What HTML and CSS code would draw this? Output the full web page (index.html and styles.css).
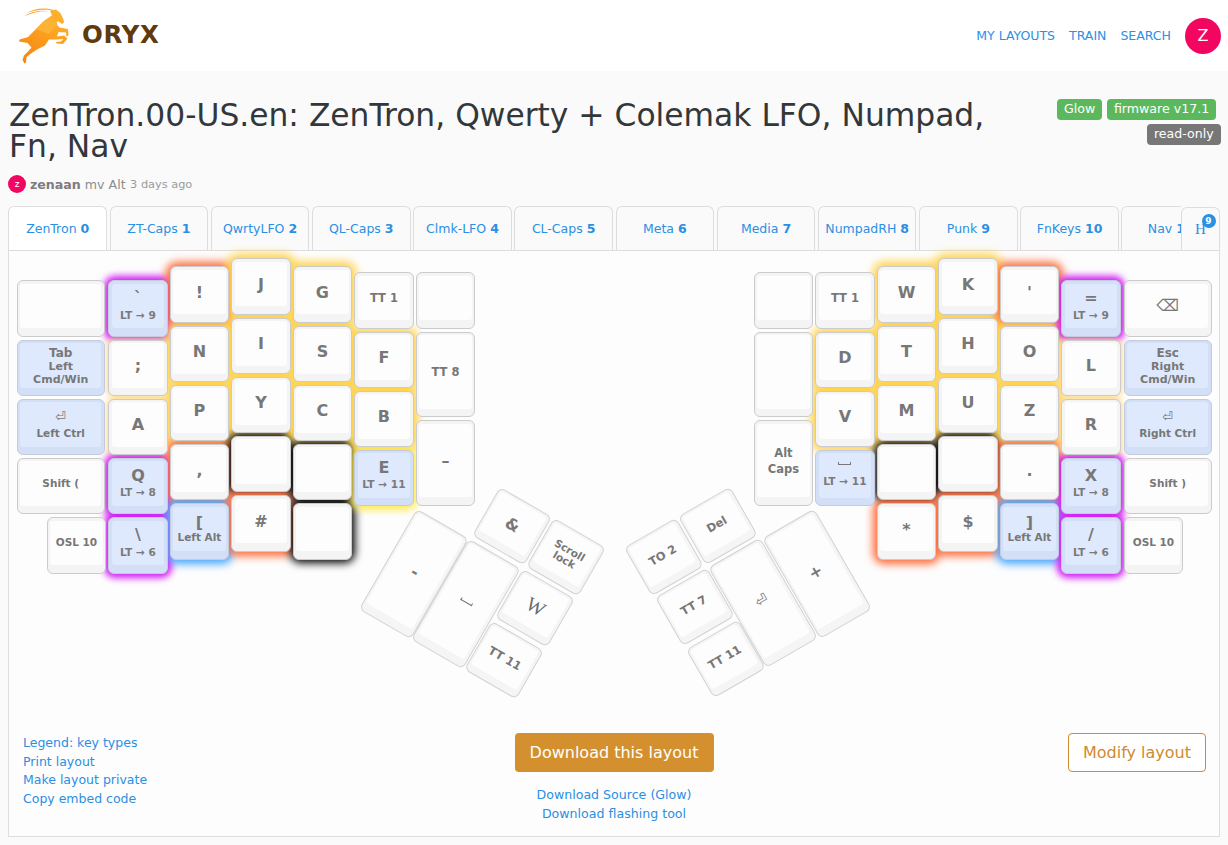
FILE: index.html
```html
<!DOCTYPE html>
<html lang="en">
<head>
<meta charset="utf-8">
<title>ORYX</title>
<link rel="stylesheet" href="styles.css">
</head>
<body>
<nav class="nav">
  <a class="brand" href="#">
    <svg class="logo" viewBox="18 5 54 60" width="54" height="60">
      <defs>
        <linearGradient id="oryx" x1="0.8" y1="0" x2="0.2" y2="1">
          <stop offset="0" stop-color="#fdb52e"/>
          <stop offset="0.55" stop-color="#fb9a1c"/>
          <stop offset="1" stop-color="#f8860f"/>
        </linearGradient>
      </defs>
      <path class="l1" d="M24 15.5C31 10.5 40 8.5 50 10.5C42 9.8 32 11.5 24 15.5Z"/>
      <path class="l1" d="M26.5 12C33 8 44 6 53 8.8L55 10C46 7.8 36 8.8 26.5 12Z"/>
      <path class="l1" d="M50 9.5L56 8.5L60.5 12L63.5 18.5L64 21.5L62 23L58.5 20.5L56.5 20.5L57.5 24.5L59.5 26.5L68 28L68.5 34.5L66.5 35.5L66 31.5L58.5 31L57 35.5L64 34.5L67.5 37.5L63 43L56.5 42.5L56 41L61 40.5L63.5 38L56 38.5L49 38.5L45 44.5L37 48.5L31 52.5L26.5 56L26 61.5L24.5 62.5L22.5 59L24 54.5L28.5 50L31.5 46.5L27.5 42L19 40.5L19.5 38.5L28 36L36 28L44 20L52 14.5Z"/>
      <path class="l3" d="M52 14.5L56.5 20.5L57.5 24.5L49 33L36 28L44 20Z"/>
    </svg>
    <span class="brand-name">ORYX</span>
  </a>
  <div class="nav-links">
    <a href="#">MY LAYOUTS</a>
    <a href="#">TRAIN</a>
    <a href="#">SEARCH</a>
    <span class="avatar">Z</span>
  </div>
</nav>

<main class="page">
  <header class="head">
    <h1>ZenTron.00-US.en: ZenTron, Qwerty + Colemak LFO, Numpad, Fn, Nav</h1>
    <div class="labels">
      <span class="label green">Glow</span><span class="label green">firmware v17.1</span><span class="label grey">read-only</span>
    </div>
  </header>
  <p class="meta"><span class="mini-avatar">z</span><b>zenaan</b><span>mv Alt</span><small>3 days ago</small></p>

  <div class="tabs-wrap">
    <div class="tabs">
      <a class="tab active" href="#">ZenTron <b>0</b></a>
      <a class="tab" href="#">ZT-Caps <b>1</b></a>
      <a class="tab" href="#">QwrtyLFO <b>2</b></a>
      <a class="tab" href="#">QL-Caps <b>3</b></a>
      <a class="tab" href="#">Clmk-LFO <b>4</b></a>
      <a class="tab" href="#">CL-Caps <b>5</b></a>
      <a class="tab" href="#">Meta <b>6</b></a>
      <a class="tab" href="#">Media <b>7</b></a>
      <a class="tab" href="#">NumpadRH <b>8</b></a>
      <a class="tab" href="#">Punk <b>9</b></a>
      <a class="tab" href="#">FnKeys <b>10</b></a>
      <a class="tab" href="#">Nav <b>11</b></a>
    </div>
    <a class="tab-more" href="#">H<span class="badge">9</span></a>
  </div>

  <section class="panel">
    <div class="keyboard">
      <div class="half">
        <div class="col col-wide off22">
          <div class="key wide"><span class="cap"></span></div>
          <div class="key wide blue"><span class="cap"><i class="s2 big2">Tab</i><i class="s2">Left</i><i class="s2">Cmd/Win</i></span></div>
          <div class="key wide blue"><span class="cap"><i class="g">⏎</i><i class="s">Left Ctrl</i></span></div>
          <div class="key wide"><span class="cap"><i class="s">Shift (</i></span></div>
          <div class="key osl-l"><span class="cap"><i class="s">OSL 10</i></span></div>
        </div>
        <div class="col off22">
          <div class="key blue purple"><span class="cap"><i class="m">`</i><i class="lt">LT → 9</i></span></div>
          <div class="key soft"><span class="cap"><i class="b">;</i></span></div>
          <div class="key soft"><span class="cap"><i class="b">A</i></span></div>
          <div class="key blue purple"><span class="cap"><i class="m">Q</i><i class="lt">LT → 8</i></span></div>
          <div class="key blue purple"><span class="cap"><i class="m">\</i><i class="lt">LT → 6</i></span></div>
        </div>
        <div class="col off8">
          <div class="key red"><span class="cap"><i class="b">!</i></span></div>
          <div class="key amber"><span class="cap"><i class="b">N</i></span></div>
          <div class="key amber"><span class="cap"><i class="b">P</i></span></div>
          <div class="key red"><span class="cap"><i class="b">,</i></span></div>
          <div class="key blue azure"><span class="cap"><i class="m">[</i><i class="s">Left Alt</i></span></div>
        </div>
        <div class="col">
          <div class="key amber"><span class="cap"><i class="b">J</i></span></div>
          <div class="key amber"><span class="cap"><i class="b">I</i></span></div>
          <div class="key amber"><span class="cap"><i class="b">Y</i></span></div>
          <div class="key black"><span class="cap"></span></div>
          <div class="key red"><span class="cap"><i class="b">#</i></span></div>
        </div>
        <div class="col off8">
          <div class="key amber"><span class="cap"><i class="b">G</i></span></div>
          <div class="key amber"><span class="cap"><i class="b">S</i></span></div>
          <div class="key amber"><span class="cap"><i class="b">C</i></span></div>
          <div class="key black"><span class="cap"></span></div>
          <div class="key black"><span class="cap"></span></div>
        </div>
        <div class="col off14">
          <div class="key"><span class="cap"><i class="t">TT 1</i></span></div>
          <div class="key amber"><span class="cap"><i class="b">F</i></span></div>
          <div class="key amber"><span class="cap"><i class="b">B</i></span></div>
          <div class="key blue yellow"><span class="cap"><i class="m">E</i><i class="lt">LT → 11</i></span></div>
        </div>
        <div class="col off14">
          <div class="key"><span class="cap"></span></div>
          <div class="key tall"><span class="cap"><i class="t">TT 8</i></span></div>
          <div class="key tall"><span class="cap"><i class="b">–</i></span></div>
        </div>
      </div>

      <div class="half">
        <div class="col off14">
          <div class="key"><span class="cap"></span></div>
          <div class="key tall"><span class="cap"></span></div>
          <div class="key tall"><span class="cap"><i class="a first">Alt</i><i class="a">Caps</i></span></div>
        </div>
        <div class="col off14">
          <div class="key"><span class="cap"><i class="t">TT 1</i></span></div>
          <div class="key amber"><span class="cap"><i class="b">D</i></span></div>
          <div class="key amber"><span class="cap"><i class="b">V</i></span></div>
          <div class="key blue"><span class="cap"><span class="spc"></span><i class="lt">LT → 11</i></span></div>
        </div>
        <div class="col off8">
          <div class="key amber"><span class="cap"><i class="b">W</i></span></div>
          <div class="key amber"><span class="cap"><i class="b">T</i></span></div>
          <div class="key amber"><span class="cap"><i class="b">M</i></span></div>
          <div class="key black"><span class="cap"></span></div>
          <div class="key red"><span class="cap"><i class="b">*</i></span></div>
        </div>
        <div class="col">
          <div class="key amber"><span class="cap"><i class="b">K</i></span></div>
          <div class="key amber"><span class="cap"><i class="b">H</i></span></div>
          <div class="key amber"><span class="cap"><i class="b">U</i></span></div>
          <div class="key black"><span class="cap"></span></div>
          <div class="key red"><span class="cap"><i class="b">$</i></span></div>
        </div>
        <div class="col off8">
          <div class="key red"><span class="cap"><i class="b">'</i></span></div>
          <div class="key amber"><span class="cap"><i class="b">O</i></span></div>
          <div class="key amber"><span class="cap"><i class="b">Z</i></span></div>
          <div class="key red"><span class="cap"><i class="b">.</i></span></div>
          <div class="key blue azure"><span class="cap"><i class="m">]</i><i class="s">Left Alt</i></span></div>
        </div>
        <div class="col off22">
          <div class="key blue purple"><span class="cap"><i class="m">=</i><i class="lt">LT → 9</i></span></div>
          <div class="key soft"><span class="cap"><i class="b">L</i></span></div>
          <div class="key soft"><span class="cap"><i class="b">R</i></span></div>
          <div class="key blue purple"><span class="cap"><i class="m">X</i><i class="lt">LT → 8</i></span></div>
          <div class="key blue purple"><span class="cap"><i class="m">/</i><i class="lt">LT → 6</i></span></div>
        </div>
        <div class="col col-wide-r off22">
          <div class="key wide"><span class="cap"><i class="g big">⌫</i></span></div>
          <div class="key wide blue"><span class="cap"><i class="s2 big2">Esc</i><i class="s2">Right</i><i class="s2">Cmd/Win</i></span></div>
          <div class="key wide blue"><span class="cap"><i class="g">⏎</i><i class="s">Right Ctrl</i></span></div>
          <div class="key wide"><span class="cap"><i class="s">Shift )</i></span></div>
          <div class="key"><span class="cap"><i class="s">OSL 10</i></span></div>
        </div>
      </div>

      <div class="key thumb-l t-amp"><span class="cap"><i class="b">&amp;</i></span></div>
      <div class="key thumb-l t-scroll"><span class="cap"><i class="sc">Scroll lock</i></span></div>
      <div class="key thumb-l t-w"><span class="cap"><i class="wq">W</i></span></div>
      <div class="key thumb-l t-tt11l"><span class="cap"><i class="t">TT 11</i></span></div>
      <div class="key thumb-l long t-dash"><span class="cap"><i class="b">-</i></span></div>
      <div class="key thumb-l long t-space"><span class="cap"><span class="spc"></span></span></div>

      <div class="key thumb-r t-to2"><span class="cap"><i class="t">TO 2</i></span></div>
      <div class="key thumb-r t-del"><span class="cap"><i class="t">Del</i></span></div>
      <div class="key thumb-r t-tt7"><span class="cap"><i class="t">TT 7</i></span></div>
      <div class="key thumb-r t-tt11r"><span class="cap"><i class="t">TT 11</i></span></div>
      <div class="key thumb-r long t-enter"><span class="cap"><i class="g ret">⏎</i></span></div>
      <div class="key thumb-r long t-plus"><span class="cap"><i class="b">+</i></span></div>
    </div>

    <div class="foot">
      <div class="foot-left">
        <a href="#">Legend: key types</a>
        <a href="#">Print layout</a>
        <a href="#">Make layout private</a>
        <a href="#">Copy embed code</a>
      </div>
      <div class="foot-center">
        <a class="btn primary" href="#">Download this layout</a>
        <div class="foot-links">
          <a href="#">Download Source (Glow)</a>
          <a href="#">Download flashing tool</a>
        </div>
      </div>
      <a class="btn outline" href="#">Modify layout</a>
    </div>
  </section>
</main>
</body>
</html>
```
FILE: styles.css
```css
* { box-sizing: border-box; }
html, body { margin: 0; padding: 0; }
body {
  width: 1228px;
  height: 845px;
  overflow: hidden;
  background: #fafafa;
  color: #333;
  font-family: "DejaVu Sans", sans-serif;
}
a { color: #2b8fe3; text-decoration: none; }

/* nav */
.nav {
  height: 71px;
  background: #fff;
  display: flex;
  align-items: center;
  justify-content: space-between;
  padding: 0 7px 0 18px;
}
.brand { display: flex; align-items: center; }
.logo { display: block; }
.l1 { fill: url(#oryx); }
.l3 { fill: #fdb233; }
.brand-name {
  margin-left: 10px;
  margin-top: -2px;
  font-size: 24.5px;
  font-weight: 700;
  letter-spacing: .6px;
  color: #5f3a0c;
}
.nav-links { display: flex; align-items: center; font-size: 12.5px; }
.nav-links a { margin-right: 14px; }
.avatar {
  width: 36px;
  height: 36px;
  border-radius: 50%;
  background: #f2065f;
  color: #fff;
  display: flex;
  align-items: center;
  justify-content: center;
  font-size: 16px;
}

/* page head */
.page { padding: 0 8px; }
.head {
  display: flex;
  justify-content: space-between;
  align-items: flex-start;
  padding-top: 28px;
}
h1 {
  margin: 0 0 0 1px;
  padding-top: 1px;
  width: 1030px;
  height: 64px;
  font-size: 31.33px;
  line-height: 31.4px;
  font-weight: 400;
  color: #32373b;
}
.labels {
  width: 172px;
  margin-right: -1px;
  display: flex;
  flex-wrap: wrap;
  justify-content: flex-end;
  row-gap: 4px;
}
.label {
  height: 21px;
  line-height: 20px;
  padding: 0 6.8px;
  border-radius: 4px;
  font-size: 12.6px;
  color: #fff;
  margin-right: 5px;
}
.green { background: #5cb85c; }
.grey { background: #777; margin-right: 0; padding: 0 7.3px; }
.meta {
  margin: 12px 0 0;
  height: 18px;
  display: flex;
  align-items: center;
  font-size: 12.6px;
  color: #8c8c8c;
}
.meta b { color: #7d7d7d; margin-right: 4px; }
.meta small { font-size: 11.34px; color: #9a9a9a; margin-left: 4.5px; }
.mini-avatar {
  width: 18px;
  height: 18px;
  border-radius: 50%;
  background: #f2065f;
  color: #fff;
  font-size: 9px;
  display: flex;
  align-items: center;
  justify-content: center;
  margin-right: 4px;
}

/* tabs */
.tabs-wrap { position: relative; margin-top: 13px; height: 45px; }
.tabs {
  display: flex;
  gap: 2.6px;
  width: 1173px;
  height: 45px;
  padding-left: .4px;
  overflow: hidden;
}
.tab {
  flex: 0 0 98.6px;
  height: 45px;
  padding-bottom: 1px;
  border: 1px solid #ddd;
  border-bottom: 0;
  border-radius: 6px 6px 0 0;
  display: flex;
  align-items: center;
  justify-content: center;
  font-size: 12.5px;
  white-space: pre;
  background: #fafafa;
}
.tab.active { background: #fff; }
.tab-more {
  position: absolute;
  top: 1px;
  right: 0;
  width: 39px;
  height: 44px;
  background: #fafafa;
  border: 1px solid #ddd;
  border-bottom: 0;
  border-radius: 6px 6px 0 0;
  font-family: "Liberation Serif", serif;
  font-size: 15px;
  display: flex;
  align-items: center;
  justify-content: center;
}
.badge {
  position: absolute;
  top: 6px;
  left: 19.5px;
  width: 14px;
  height: 14px;
  border-radius: 50%;
  background: #2b8fe3;
  color: #fff;
  font: 700 9px/14px "DejaVu Sans", sans-serif;
  text-align: center;
}

/* panel */
.panel {
  height: 587px;
  margin-top: -1px;
  border: 1px solid #ddd;
  background: #fdfdfd;
  position: relative;
}
.keyboard {
  position: relative;
  isolation: isolate;
  display: flex;
  justify-content: space-between;
  height: 475px;
  padding: 7.3px 7.3px 0 7.7px;
}
.half { display: flex; gap: 2px; align-items: flex-start; }
.col { display: flex; flex-direction: column; gap: 2.85px; width: 59.5px; }
.col-wide { width: 89.5px; }
.col-wide-r { width: 88px; margin-left: 1px; }
.off8 { margin-top: 8px; }
.off14 { margin-top: 14px; }
.off22 { margin-top: 22px; }

/* keys */
.key {
  position: relative;
  width: 59.5px;
  height: 56.4px;
  flex: none;
  padding: 2.4px 2.4px 7.4px;
  border: 1px solid #cbcbcb;
  border-radius: 6px;
  background: #f4f4f4;
}
.key.wide { width: 88px; }
.key.tall { height: 85.4px; }
.osl-l { margin-left: 30px; }
.col .key.tall:last-child { margin-top: .5px; }
.cap {
  display: flex;
  flex-direction: column;
  align-items: center;
  justify-content: center;
  width: 100%;
  height: 100%;
  border-radius: 3px;
  background: #fdfdfd;
  text-align: center;
  color: #777;
}
.cap i { font-style: normal; display: block; }
.b { font-size: 16px; font-weight: 700; line-height: 20px; padding-top: 2px; }
.m { font-size: 16px; font-weight: 700; line-height: 17px; }
.s { font-size: 10.5px; font-weight: 700; line-height: 13px; white-space: nowrap; }
.s2 { font-size: 11px; font-weight: 700; line-height: 13px; white-space: nowrap; }
.big2 { font-size: 12px; margin-top: 2px; }
.t { font-size: 11.5px; font-weight: 700; line-height: 14px; white-space: nowrap; }
.a { font-size: 11.5px; font-weight: 700; line-height: 16px; }
.a.first { margin-top: 2px; }
.lt { font-size: 10.6px; font-weight: 700; line-height: 15px; margin-top: 1.5px; white-space: nowrap; color: #7a7a7a; }
.g { font-size: 13px; line-height: 16px; margin-bottom: 2px; }
.g.big { font-size: 16px; margin-bottom: 0; }
.g.ret { font-size: 15px; margin-bottom: 0; }
.sc { font-size: 10.5px; font-weight: 700; line-height: 11px; width: 40px; }
.wq { font-family: "Liberation Serif", serif; font-size: 20px; line-height: 20px; color: #6c6c6c; }
.spc {
  display: block;
  width: 13px;
  height: 3px;
  margin-bottom: 7px;
  border: 1px solid #777;
  border-top: 0;
}
.thumb-l .spc { margin-bottom: 0; }

.blue { background: #d3dff7; border-color: #c3cbdc; }
.blue .cap { background: #dfe9fd; }

/* glow layer sits behind all keys */
.purple::before, .red::before, .amber::before, .azure::before,
.black::before, .yellow::before, .soft::before {
  content: "";
  position: absolute;
  inset: 0;
  z-index: -1;
  border-radius: 6px;
}
.purple::before { box-shadow: 0 0 7px 5px #d01bf2; }
.red::before { box-shadow: 0 0 8px 5px #ff6a38; }
.amber::before { box-shadow: 0 0 10px 5px #ffd040; }
.soft::before { box-shadow: 0 0 6px 2px #ffd680; }
.azure::before { box-shadow: 0 0 8px 5px #45a6ff; }
.black::before { box-shadow: 0 0 8px 4px #000; }
.yellow::before { box-shadow: 0 0 8px 4px #ffe633; }

/* thumb clusters: rotated keys on the free canvas */
.thumb-l, .thumb-r {
  position: absolute;
  margin-left: -29.75px;
  margin-top: -28.2px;
  border-color: #d2d2d2;
  background: #f5f5f5;
}
.thumb-l { transform: rotate(30deg); }
.thumb-r { transform: rotate(-30deg); }
.thumb-l.long, .thumb-r.long { height: 115.5px; margin-top: -57.75px; }
.t-amp     { left: 502.7px; top: 275px; }
.t-scroll  { left: 556.7px; top: 305.7px; }
.t-w       { left: 525.3px; top: 356.7px; }
.t-tt11l   { left: 494.3px; top: 409px; }
.t-dash    { left: 404.3px; top: 322.3px; }
.t-space   { left: 457px;   top: 352.3px; }
.t-to2     { left: 654.7px; top: 305.7px; }
.t-del     { left: 708.7px; top: 275.3px; }
.t-tt7     { left: 686px;   top: 356.3px; }
.t-tt11r   { left: 717px;   top: 408.3px; }
.t-enter   { left: 753.7px; top: 352px; }
.t-plus    { left: 807.3px; top: 322.3px; }

/* footer of panel */
.foot {
  display: flex;
  justify-content: space-between;
  align-items: flex-start;
  padding: 7px 13px 0 14px;
  font-size: 12.5px;
}
.foot-left { display: flex; flex-direction: column; padding-top: 1px; width: 139px; }
.foot-left a { line-height: 18.7px; }
.foot-center { display: flex; flex-direction: column; align-items: center; margin-left: -2px; }
.foot-links { display: flex; flex-direction: column; align-items: center; margin-top: 13px; font-size: 12.6px; }
.foot-links a { line-height: 19px; }
.btn {
  height: 39px;
  display: flex;
  align-items: center;
  justify-content: center;
  border-radius: 4px;
  font-size: 16px;
}
.primary { width: 199px; background: #d4902f; color: #fff; }
.outline { width: 138px; background: #fff; border: 1px solid #d08a2f; color: #d08a2f; }
```
